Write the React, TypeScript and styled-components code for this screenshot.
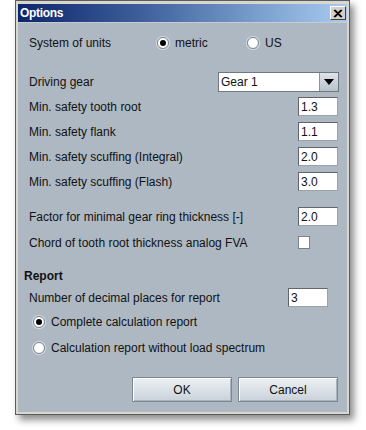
import React from "react";
import styled, { createGlobalStyle } from "styled-components";

const Global = createGlobalStyle`
  html, body { margin: 0; padding: 0; background: #ffffff; }
  body { font-family: "Liberation Sans", Arial, sans-serif; font-size: 12px; color: #111; }
`;

const Page = styled.div`
  width: 366px;
  height: 430px;
  padding-left: 15px;
  box-sizing: border-box;
`;

const Window = styled.div`
  width: 335px;
  height: 415px;
  box-sizing: border-box;
  border: 1px solid #5c5c5c;
  background: #d8d6d0;
  padding: 3px 2px 2px 2px;
  display: flex;
  flex-direction: column;
  box-shadow: 4px 5px 7px rgba(0, 0, 0, 0.45);
`;

const TitleBar = styled.div`
  height: 18px;
  flex: none;
  background: linear-gradient(to right, #0c266b 0%, #3a5b98 35%, #7ea2d0 75%, #a8cbf0 100%);
  display: flex;
  align-items: center;
  justify-content: space-between;
  padding: 0 1px 0 2px;
`;

const Title = styled.span`
  color: #fff;
  font-weight: bold;
  font-size: 12px;
  letter-spacing: -0.3px;
`;

const CloseButton = styled.div`
  width: 16px;
  height: 14px;
  box-sizing: border-box;
  background: #d4d0c8;
  border-top: 1px solid #ffffff;
  border-left: 1px solid #ffffff;
  border-right: 1px solid #404040;
  border-bottom: 1px solid #404040;
  display: flex;
  align-items: center;
  justify-content: center;
`;

const Content = styled.div`
  flex: 1;
  background: #aeb8c3;
  border-top: 1px solid #c8ccd0;
  padding-top: 11px;
  display: flex;
  flex-direction: column;
`;

const Row = styled.div<{ $h: number; $mt?: number; $pl?: number; $pr?: number }>`
  height: ${(p) => p.$h}px;
  margin-top: ${(p) => p.$mt ?? 0}px;
  padding-left: ${(p) => p.$pl ?? 11}px;
  padding-right: ${(p) => p.$pr ?? 9}px;
  display: flex;
  align-items: center;
  justify-content: space-between;
`;

const UnitsRow = styled.div`
  height: 18px;
  padding-left: 11px;
  display: grid;
  grid-template-columns: 128px 90px 1fr;
  align-items: center;
`;

const Label = styled.span<{ $bold?: boolean }>`
  font-size: 12px;
  font-weight: ${(p) => (p.$bold ? "bold" : "normal")};
  white-space: nowrap;
`;

const RadioItem = styled.label`
  display: flex;
  align-items: center;
  gap: 6px;
  font-size: 12px;
  white-space: nowrap;
`;

const RadioCircle = styled.span<{ $on?: boolean }>`
  width: 12px;
  height: 12px;
  box-sizing: border-box;
  border-radius: 50%;
  background: radial-gradient(circle at 40% 40%, #ffffff 55%, #e4e8ec 100%);
  border: 1px solid #7c8793;
  box-shadow: 0 0 0 1px rgba(255, 255, 255, 0.5);
  display: flex;
  align-items: center;
  justify-content: center;
  &::after {
    content: "";
    width: 6px;
    height: 6px;
    border-radius: 50%;
    background: #000;
    display: ${(p) => (p.$on ? "block" : "none")};
  }
`;

const Combo = styled.div`
  width: 121px;
  height: 20px;
  box-sizing: border-box;
  border: 1px solid #6f7780;
  background: #fff;
  display: flex;
  margin-right: -1px;
`;

const ComboText = styled.span`
  flex: 1;
  padding-left: 2px;
  line-height: 18px;
  font-size: 12px;
`;

const ComboArrow = styled.span`
  width: 18px;
  border-left: 1px solid #8a949e;
  background: linear-gradient(#dfe4e9, #b8c1ca);
  display: flex;
  align-items: center;
  justify-content: center;
`;

const Field = styled.input<{ $w?: number }>`
  width: ${(p) => p.$w ?? 40}px;
  height: 19px;
  box-sizing: border-box;
  border: 1px solid #5f656b;
  border-right-color: #9aa2aa;
  border-bottom-color: #9aa2aa;
  background: #fff;
  font-family: "Liberation Sans", Arial, sans-serif;
  font-size: 12px;
  padding: 0 2px;
  margin: 0;
  color: #111;
  outline: none;
`;

const FieldSlot = styled.div`
  width: 40px;
  display: flex;
  justify-content: flex-start;
`;

const Check = styled.span`
  width: 12px;
  height: 13px;
  box-sizing: border-box;
  border: 1px solid #7b848d;
  background: #fff;
`;

const RadioRow = styled.div<{ $mt: number }>`
  height: 20px;
  margin-top: ${(p) => p.$mt}px;
  padding-left: 15px;
  display: flex;
  align-items: center;
`;

const ButtonBar = styled.div`
  margin-top: 19px;
  padding-right: 9px;
  display: flex;
  justify-content: flex-end;
  gap: 6px;
`;

const Button = styled.button`
  width: 100px;
  height: 25px;
  box-sizing: border-box;
  border: 1px solid #7d8894;
  box-shadow: inset 1px 1px 0 #ffffff, inset -1px -1px 0 #aab3bc;
  background: linear-gradient(#eef1f4 0%, #dde3e9 45%, #c9d1d9 100%);
  font-family: "Liberation Sans", Arial, sans-serif;
  font-size: 12px;
  color: #111;
  padding: 0;
  margin: 0;
`;

const rows: { label: string; value: string; mt: number }[] = [
  { label: "Min. safety tooth root", value: "1.3", mt: 5 },
  { label: "Min. safety flank", value: "1.1", mt: 6 },
  { label: "Min. safety scuffing (Integral)", value: "2.0", mt: 6 },
  { label: "Min. safety scuffing (Flash)", value: "3.0", mt: 6 },
];

export default function App() {
  return (
    <Page>
      <Global />
      <Window>
        <TitleBar>
          <Title>Options</Title>
          <CloseButton>
            <svg width="10" height="9" viewBox="0 0 10 9">
              <path d="M1 1 L8 8 M2 1 L9 8 M8 1 L1 8 M9 1 L2 8" stroke="#000" strokeWidth="1.1" />
            </svg>
          </CloseButton>
        </TitleBar>
        <Content>
          <UnitsRow>
            <Label>System of units</Label>
            <RadioItem>
              <RadioCircle $on />
              metric
            </RadioItem>
            <RadioItem>
              <RadioCircle />
              US
            </RadioItem>
          </UnitsRow>
          <Row $h={20} $mt={20}>
            <Label>Driving gear</Label>
            <Combo>
              <ComboText>Gear 1</ComboText>
              <ComboArrow>
                <svg width="10" height="6" viewBox="0 0 10 6">
                  <path d="M0 0 H10 L5 6 Z" fill="#000" />
                </svg>
              </ComboArrow>
            </Combo>
          </Row>
          {rows.map((r) => (
            <Row key={r.label} $h={19} $mt={r.mt}>
              <Label>{r.label}</Label>
              <Field readOnly value={r.value} />
            </Row>
          ))}
          <Row $h={19} $mt={16}>
            <Label>Factor for minimal gear ring thickness [-]</Label>
            <Field readOnly value="2.0" />
          </Row>
          <Row $h={13} $mt={10}>
            <Label>Chord of tooth root thickness analog FVA</Label>
            <FieldSlot>
              <Check />
            </FieldSlot>
          </Row>
          <Row $h={14} $mt={20} $pl={6}>
            <Label $bold>Report</Label>
          </Row>
          <Row $h={19} $mt={5} $pr={19}>
            <Label>Number of decimal places for report</Label>
            <Field readOnly value="3" />
          </Row>
          <RadioRow $mt={5}>
            <RadioItem>
              <RadioCircle $on />
              Complete calculation report
            </RadioItem>
          </RadioRow>
          <RadioRow $mt={6}>
            <RadioItem>
              <RadioCircle />
              Calculation report without load spectrum
            </RadioItem>
          </RadioRow>
          <ButtonBar>
            <Button>OK</Button>
            <Button>Cancel</Button>
          </ButtonBar>
        </Content>
      </Window>
    </Page>
  );
}
